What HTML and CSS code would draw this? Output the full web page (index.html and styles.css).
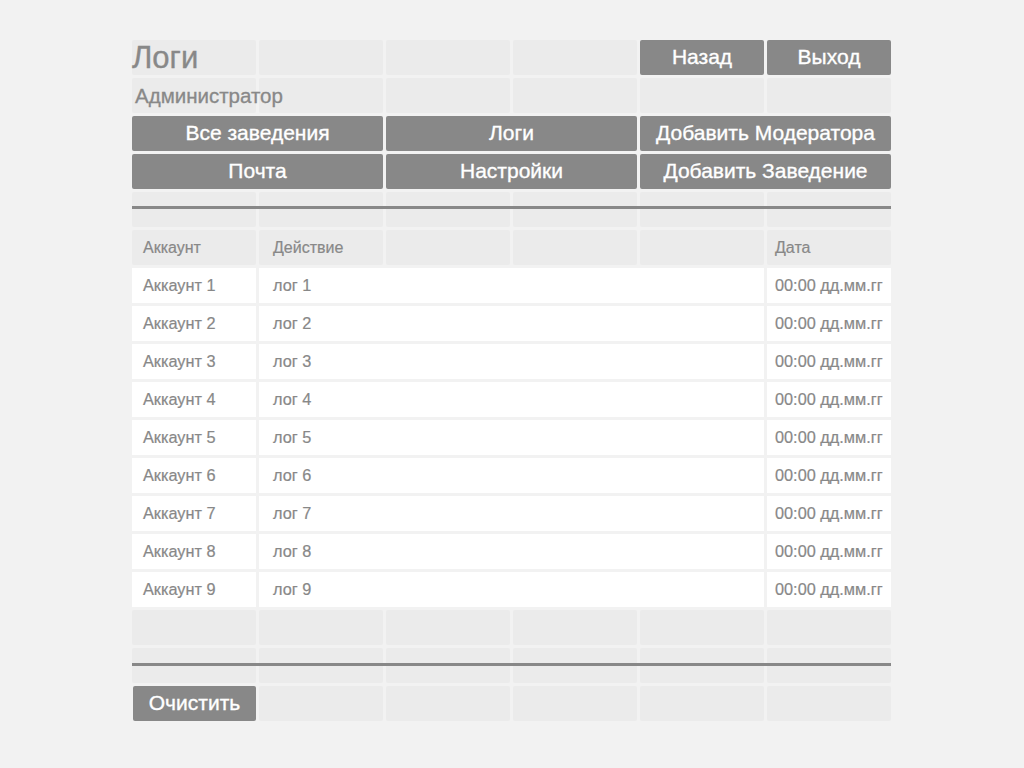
FILE: index.html
```html
<!DOCTYPE html>
<html lang="ru">
<head>
<meta charset="utf-8">
<title>Логи</title>
<link rel="stylesheet" href="styles.css">
</head>
<body>
<div class="board">
  <div class="row">
    <div class="cell title">Логи</div>
    <div class="cell"></div>
    <div class="cell"></div>
    <div class="cell"></div>
    <div class="btn">Назад</div>
    <div class="btn">Выход</div>
  </div>
  <div class="row">
    <div class="cell role">Администратор</div>
    <div class="cell"></div>
    <div class="cell"></div>
    <div class="cell"></div>
    <div class="cell"></div>
    <div class="cell"></div>
  </div>
  <div class="row">
    <div class="btn span2">Все заведения</div>
    <div class="btn span2">Логи</div>
    <div class="btn span2">Добавить Модератора</div>
  </div>
  <div class="row">
    <div class="btn span2">Почта</div>
    <div class="btn span2">Настройки</div>
    <div class="btn span2">Добавить Заведение</div>
  </div>
  <div class="row ruled">
    <div class="cell"></div>
    <div class="cell"></div>
    <div class="cell"></div>
    <div class="cell"></div>
    <div class="cell"></div>
    <div class="cell"></div>
  </div>
  <div class="row">
    <div class="cell th acc">Аккаунт</div>
    <div class="cell th act">Действие</div>
    <div class="cell"></div>
    <div class="cell"></div>
    <div class="cell"></div>
    <div class="cell th date">Дата</div>
  </div>
  <div class="row"><div class="td acc">Аккаунт 1</div><div class="td act span4">лог 1</div><div class="td date">00:00 дд.мм.гг</div></div>
  <div class="row"><div class="td acc">Аккаунт 2</div><div class="td act span4">лог 2</div><div class="td date">00:00 дд.мм.гг</div></div>
  <div class="row"><div class="td acc">Аккаунт 3</div><div class="td act span4">лог 3</div><div class="td date">00:00 дд.мм.гг</div></div>
  <div class="row"><div class="td acc">Аккаунт 4</div><div class="td act span4">лог 4</div><div class="td date">00:00 дд.мм.гг</div></div>
  <div class="row"><div class="td acc">Аккаунт 5</div><div class="td act span4">лог 5</div><div class="td date">00:00 дд.мм.гг</div></div>
  <div class="row"><div class="td acc">Аккаунт 6</div><div class="td act span4">лог 6</div><div class="td date">00:00 дд.мм.гг</div></div>
  <div class="row"><div class="td acc">Аккаунт 7</div><div class="td act span4">лог 7</div><div class="td date">00:00 дд.мм.гг</div></div>
  <div class="row"><div class="td acc">Аккаунт 8</div><div class="td act span4">лог 8</div><div class="td date">00:00 дд.мм.гг</div></div>
  <div class="row"><div class="td acc">Аккаунт 9</div><div class="td act span4">лог 9</div><div class="td date">00:00 дд.мм.гг</div></div>
  <div class="row">
    <div class="cell"></div>
    <div class="cell"></div>
    <div class="cell"></div>
    <div class="cell"></div>
    <div class="cell"></div>
    <div class="cell"></div>
  </div>
  <div class="row ruled low">
    <div class="cell"></div>
    <div class="cell"></div>
    <div class="cell"></div>
    <div class="cell"></div>
    <div class="cell"></div>
    <div class="cell"></div>
  </div>
  <div class="row">
    <div class="btn clear">Очистить</div>
    <div class="cell"></div>
    <div class="cell"></div>
    <div class="cell"></div>
    <div class="cell"></div>
    <div class="cell"></div>
  </div>
</div>
</body>
</html>
```

FILE: styles.css
```css
* { box-sizing: border-box; }

html, body {
  margin: 0;
  padding: 0;
  background: #f2f2f2;
  font-family: "Liberation Sans", Arial, sans-serif;
  color: #888888;
}

.board {
  width: 759px;
  margin: 40px 0 0 132px;
  display: flex;
  flex-direction: column;
  gap: 3px;
}

.row {
  display: grid;
  grid-template-columns: repeat(6, 124px);
  column-gap: 3px;
  height: 35px;
}

.ruled { position: relative; }
.ruled::after {
  content: "";
  position: absolute;
  left: 0;
  right: 0;
  top: 14px;
  height: 3px;
  background: #888888;
}
.ruled.low::after { top: 15px; }

.cell {
  background: #ebebeb;
  border-radius: 2px;
}

.title {
  font-size: 31px;
  line-height: 35px;
  white-space: nowrap;
  -webkit-text-stroke: 0.35px #888888;
}

.role {
  font-size: 20.5px;
  line-height: 35px;
  padding-left: 3px;
  white-space: nowrap;
  position: relative;
  z-index: 1;
  -webkit-text-stroke: 0.3px #888888;
}

.btn {
  background: #888888;
  color: #ffffff;
  border-radius: 2px;
  font-size: 21px;
  line-height: 34px;
  text-align: center;
  white-space: nowrap;
  -webkit-text-stroke: 0.35px #ffffff;
}

.span2 { grid-column: span 2; }
.span4 { grid-column: span 4; }

.clear { margin-left: 1px; }

.th, .td {
  font-size: 16px;
  line-height: 35px;
  white-space: nowrap;
  -webkit-text-stroke: 0.2px #888888;
}

.td {
  background: #ffffff;
  font-size: 16.3px;
}

.acc { padding-left: 11px; }
.act { padding-left: 14px; }
.date { padding-left: 8px; }
```
